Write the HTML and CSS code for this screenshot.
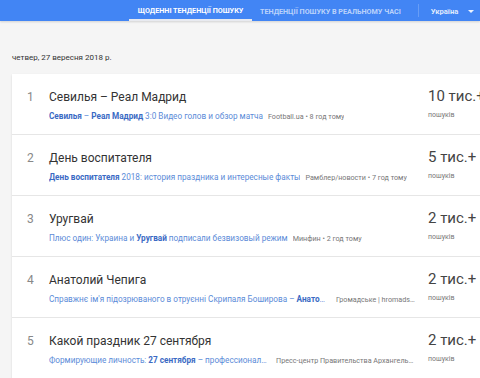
FILE: index.html
```html
<!DOCTYPE html>
<html>
<head>
<meta charset="utf-8">
<link rel="stylesheet" href="styles.css">
</head>
<body>
<header class="topbar">
  <nav class="tabs">
    <div class="tab active">Щоденні тенденції пошуку</div>
    <div class="tab">Тенденції пошуку в реальному часі</div>
  </nav>
  <div class="sep"></div>
  <div class="geo">Україна <span class="caret"></span></div>
</header>
<main class="content">
  <div class="date">четвер, 27 вересня 2018 р.</div>
  <div class="card">
    <div class="row">
      <div class="rank">1</div>
      <div class="main">
        <div class="title">Севилья – Реал Мадрид</div>
        <div class="sub"><span class="link"><b>Севилья</b> – <b>Реал Мадрид</b> 3:0 Видео голов и обзор матча</span><span class="src">Football.ua • 8 год тому</span></div>
      </div>
      <div class="count"><div class="num">10 тис.+</div><div class="lbl">пошуків</div></div>
    </div>
    <div class="row">
      <div class="rank">2</div>
      <div class="main">
        <div class="title">День воспитателя</div>
        <div class="sub"><span class="link"><b>День воспитателя</b> 2018: история праздника и интересные факты</span><span class="src">Рамблер/новости • 7 год тому</span></div>
      </div>
      <div class="count"><div class="num">5 тис.+</div><div class="lbl">пошуків</div></div>
    </div>
    <div class="row">
      <div class="rank">3</div>
      <div class="main">
        <div class="title">Уругвай</div>
        <div class="sub"><span class="link">Плюс один: Украина и <b>Уругвай</b> подписали безвизовый режим</span><span class="src">Минфин • 2 год тому</span></div>
      </div>
      <div class="count"><div class="num">2 тис.+</div><div class="lbl">пошуків</div></div>
    </div>
    <div class="row">
      <div class="rank">4</div>
      <div class="main">
        <div class="title">Анатолий Чепига</div>
        <div class="sub"><span class="link w4">Справжнє ім'я підозрюваного в отруєнні Скрипаля Боширова – <b>Анатолій Чепига</b></span><span class="src w4s">Громадське | hromadske.ua • 1 год тому</span></div>
      </div>
      <div class="count"><div class="num">2 тис.+</div><div class="lbl">пошуків</div></div>
    </div>
    <div class="row">
      <div class="rank">5</div>
      <div class="main">
        <div class="title">Какой праздник 27 сентября</div>
        <div class="sub"><span class="link w5">Формирующие личность: <b>27 сентября</b> – профессиональный праздник</span><span class="src w5s">Пресс-центр Правительства Архангельской области • 3 год тому</span></div>
      </div>
      <div class="count"><div class="num">2 тис.+</div><div class="lbl">пошуків</div></div>
    </div>
  </div>
</main>
</body>
</html>
```
FILE: styles.css
```css
html, body {
  margin: 0;
  padding: 0;
  overflow: hidden;
  width: 480px;
  height: 378px;
}
body {
  background: #f5f5f5;
  font-family: Roboto, "Liberation Sans", sans-serif;
  color: #212121;
}
.topbar {
  height: 21px;
  background: #4285f4;
  display: flex;
  align-items: stretch;
  box-shadow: 0 1px 2px rgba(0,0,0,0.15);
}
.tabs {
  display: flex;
  margin-left: 129px;
}
.tab {
  font-size: 7.2px;
  font-weight: 700;
  text-transform: uppercase;
  color: rgba(255,255,255,0.65);
  padding: 0 8px;
  display: flex;
  align-items: center;
  white-space: nowrap;
  box-sizing: border-box;
  padding-top: 2px;
}
.tab.active {
  color: #fff;
  width: 123px;
  padding-left: 0;
  padding-right: 0;
  justify-content: center;
  border-bottom: 2px solid #e8eaf0;
}
.sep {
  width: 1px;
  background: rgba(255,255,255,0.2);
  margin: 4px 0 4px 9px;
}
.geo {
  margin-left: 12px;
  font-size: 7.6px;
  font-weight: 700;
  color: rgba(255,255,255,0.85);
  display: flex;
  align-items: center;
  padding-top: 1px;
}
.caret {
  margin-left: 10px;
  width: 0;
  height: 0;
  border-left: 3px solid transparent;
  border-right: 3px solid transparent;
  border-top: 3px solid rgba(255,255,255,0.9);
}
.content {
  padding: 0 0 0 12px;
}
.date {
  font-size: 8px;
  color: #333;
  padding-top: 32px;
  height: 10px;
  line-height: 10px;
  margin-bottom: 11px;
}
.card {
  width: 480px;
  background: #fff;
  box-shadow: 0 1px 2px rgba(0,0,0,0.12);
}
.row {
  height: 61px;
  display: flex;
  border-bottom: 1px solid #e6e6e6;
  box-sizing: border-box;
}
.rank {
  width: 37px;
  padding-left: 15px;
  box-sizing: border-box;
  font-size: 12px;
  color: #888;
  padding-top: 15px;
  line-height: 16px;
}
.main {
  width: 367px;
  min-width: 0;
}
.title {
  font-size: 12px;
  color: #333;
  padding-top: 14px;
  line-height: 18px;
  height: 18px;
}
.sub {
  margin-top: 5px;
  display: flex;
  align-items: baseline;
  white-space: nowrap;
  font-size: 8.2px;
  line-height: 10px;
}
.link {
  color: #5b8bd8;
  overflow: hidden;
  text-overflow: ellipsis;
}
.link b {
  color: #3a6ac4;
  font-weight: 700;
}
.src {
  color: #777;
  font-size: 7.2px;
  margin-left: 5px;
  overflow: hidden;
  text-overflow: ellipsis;
}
.w4 { max-width: 277px; flex-shrink: 0; }
.w4s { max-width: 82px; margin-left: 10px; }
.w5 { max-width: 219px; flex-shrink: 0; }
.w5s { max-width: 142px; margin-left: 8px; }
.count {
  margin-left: 12px;
  padding-top: 13px;
}
.num {
  font-size: 15px;
  color: #444;
  line-height: 18px;
  white-space: nowrap;
}
.lbl {
  font-size: 7px;
  color: #777;
  margin-top: 5px;
  line-height: 10px;
}
```
